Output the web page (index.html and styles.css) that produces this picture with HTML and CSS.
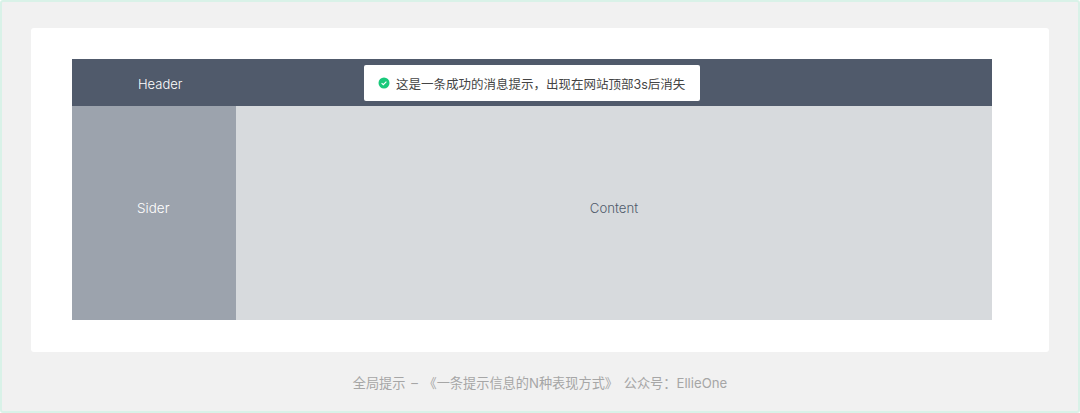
FILE: index.html
```html
<!DOCTYPE html>
<html lang="zh-CN">
<head>
  <meta charset="UTF-8" />
  <meta name="viewport" content="width=device-width, initial-scale=1.0"/>
  <title>全局提示</title>
  <link rel="stylesheet" href="styles.css">
</head>
<body>
  <div class="frame">
    <div class="card">
      <div class="layout">
        <div class="header">
          <span class="header-label">Header</span>
          <div class="message">
            <svg class="message-icon" width="12" height="12" viewBox="0 0 12 12">
              <circle cx="6" cy="6" r="5.5" fill="#19c97b"/>
              <path d="M3.6 6.1 L5.3 7.7 L8.4 4.6" fill="none" stroke="#fff" stroke-width="1.1"/>
            </svg>
            <span>这是一条成功的消息提示，出现在网站顶部3s后消失</span>
          </div>
        </div>
        <div class="main">
          <div class="sider">Sider</div>
          <div class="content">Content</div>
        </div>
      </div>
    </div>
    <div class="caption">全局提示 – 《一条提示信息的N种表现方式》 公众号：EllieOne</div>
  </div>
</body>
</html>
```

FILE: styles.css
```css
* {
  box-sizing: border-box;
}
body {
  margin: 0;
  font-family: Inter, "Noto Sans CJK SC", sans-serif;
  font-weight: 300;
}
.frame {
  width: 1080px;
  height: 413px;
  padding: 26px 29px 0;
  background-color: #f1f1f1;
  border: 2px solid #d9f2e8;
  border-radius: 3px;
}
.card {
  height: 324px;
  padding: 31px 57px 32px 41px;
  background-color: #fff;
  border-radius: 3px;
}
.layout {
  height: 261px;
  display: flex;
  flex-direction: column;
}
.header {
  position: relative;
  height: 47px;
  display: flex;
  align-items: center;
  padding: 2px 0 0 66px;
  background-color: #505a6b;
  color: #fff;
  font-size: 13px;
}
.message {
  position: absolute;
  left: 292px;
  top: 6px;
  width: 336px;
  height: 36px;
  display: flex;
  align-items: center;
  gap: 6px;
  padding-left: 14px;
  background-color: #fff;
  border-radius: 2px;
  color: #444;
  font-size: 12.5px;
  font-weight: 400;
  white-space: nowrap;
}
.message-icon {
  flex-shrink: 0;
}
.main {
  flex: 1;
  display: flex;
}
.sider {
  width: 164px;
  display: flex;
  align-items: center;
  padding: 0 0 10px 65px;
  background-color: #9ca3ad;
  color: #fff;
  font-size: 13.5px;
}
.content {
  flex: 1;
  display: flex;
  align-items: center;
  justify-content: center;
  padding-bottom: 10px;
  background-color: #d7dadd;
  color: #505a6b;
  font-size: 13.2px;
}
.caption {
  margin-top: 21px;
  text-align: center;
  color: #a6a6a6;
  font-size: 13.2px;
  font-weight: 400;
  line-height: 20px;
  word-spacing: 2px;
}
```
